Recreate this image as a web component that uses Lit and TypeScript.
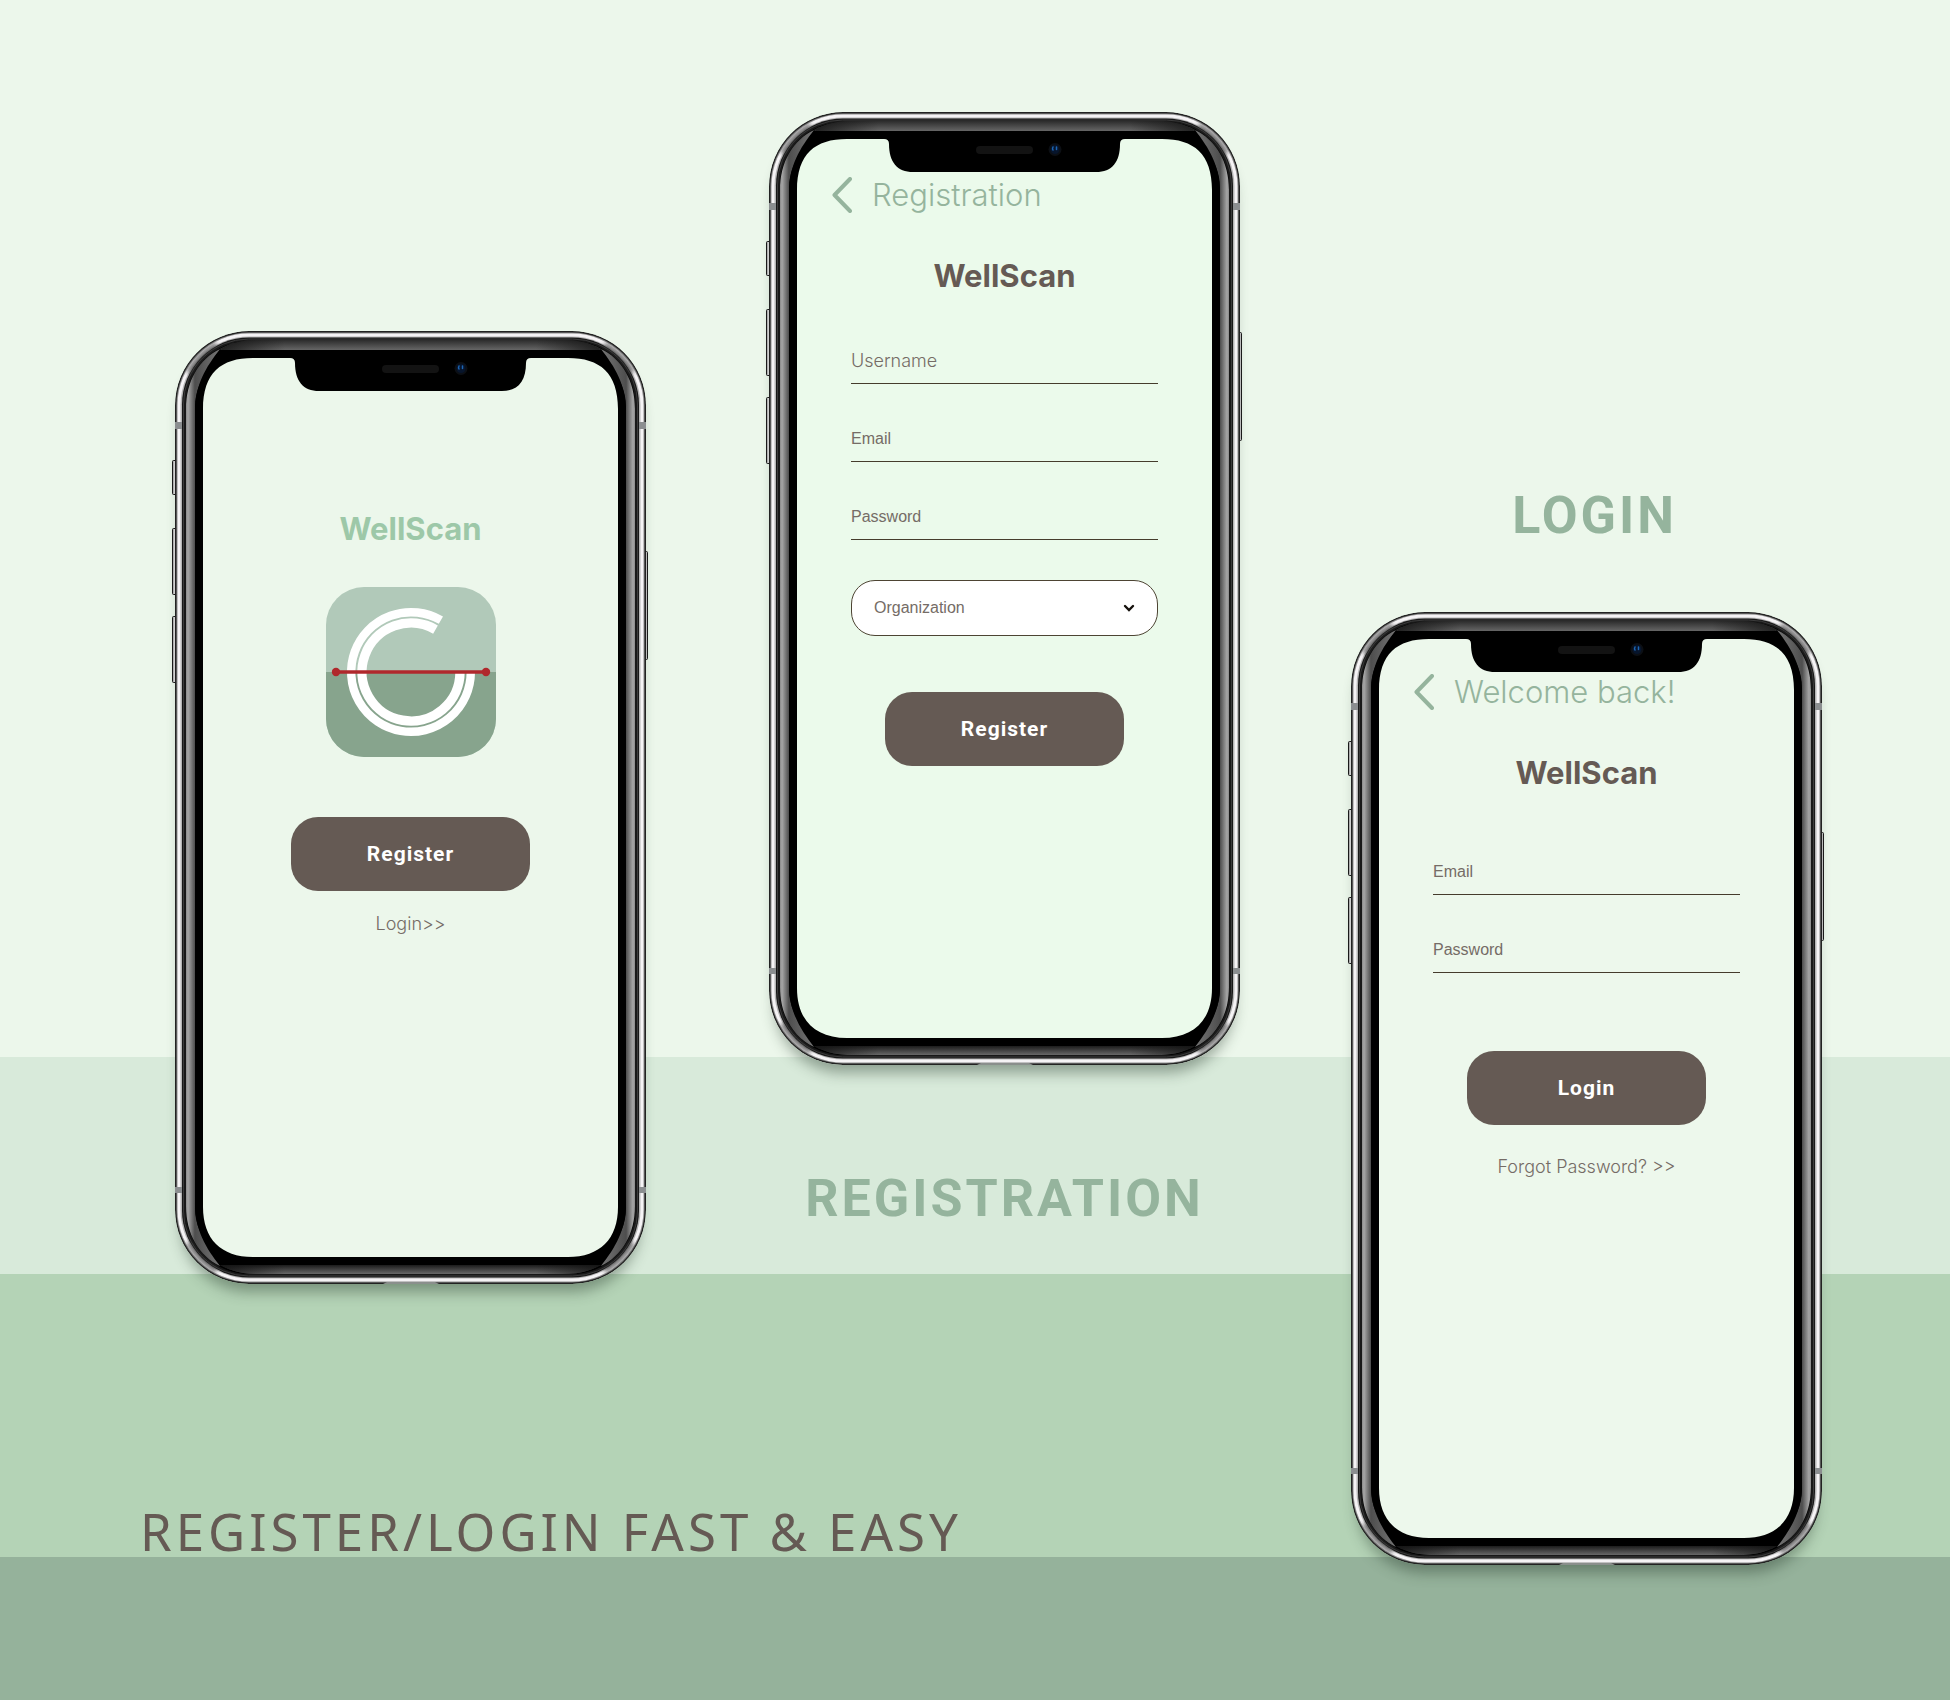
import { LitElement, html, svg, css } from "lit";
import { customElement, property } from "lit/decorators.js";

const controls = css`
  .title {
    margin: 0;
    font: 700 31px/40px Inter, "Liberation Sans", sans-serif;
    text-align: center;
    color: #655a54;
  }
  .primary {
    display: block;
    width: 239px;
    height: 74px;
    margin: 0 auto;
    padding: 0;
    border: 0;
    border-radius: 27px;
    background: #655a54;
    color: #ffffff;
    font: 700 21px/24px Roboto, "Liberation Sans", sans-serif;
    letter-spacing: 1px;
    cursor: pointer;
  }
  .link {
    display: block;
    font: 300 18px/24px Inter, "Liberation Sans", sans-serif;
    text-align: center;
    color: #756c66;
    text-decoration: none;
  }
  .bar {
    display: flex;
    align-items: center;
    gap: 20px;
    height: 36px;
    padding-left: 35px;
    color: #95b49d;
  }
  .back {
    display: block;
    width: 20px;
    height: 36px;
    padding: 0;
    border: 0;
    background: none;
    color: inherit;
    cursor: pointer;
  }
  .back svg {
    display: block;
  }
  .heading {
    margin: 0;
    font: 300 31px/36px Inter, "Liberation Sans", sans-serif;
    white-space: nowrap;
  }
  .fields {
    display: flex;
    flex-direction: column;
    gap: 34px;
    padding: 0 54px;
  }
  .field {
    display: grid;
    align-items: center;
    height: 44px;
    box-sizing: border-box;
    padding-bottom: 2px;
    border-bottom: 1px solid #453c2c;
    font: 400 16px/20px "Liberation Sans", Arial, sans-serif;
    color: #756c66;
  }
  .field.light {
    font: 300 18px/20px Inter, "Liberation Sans", sans-serif;
  }
  .field span,
  .field input {
    grid-area: 1 / 1;
  }
  .field input {
    width: 100%;
    height: 100%;
    box-sizing: border-box;
    padding: 0;
    border: 0;
    background: none;
    font: inherit;
    color: inherit;
  }
`;

const backIcon = html`<svg width="20" height="36" viewBox="0 0 20 36" aria-hidden="true">
  <path d="M18 2 L2.500 18 L18 34" fill="none" stroke="currentColor" stroke-width="4" stroke-linecap="round" stroke-linejoin="round" />
</svg>`;

@customElement("phone-frame")
export class PhoneFrame extends LitElement {
  static styles = css`
    :host {
      display: block;
      position: relative;
      width: 471px;
      min-height: 953px;
      box-sizing: border-box;
      padding: 27px 28px 28px;
      border-radius: 74px;
      box-shadow: 0 14px 14px -6px rgba(40, 60, 45, 0.42);
    }
    .body {
      position: absolute;
      inset: 0;
      width: 100%;
      height: 100%;
      overflow: visible;
    }
    .screen {
      position: relative;
      min-height: 898px;
    }
  `;

  private side() {
    return svg`
      <path fill="url(#side)" d="M11 100 V78 C11 50 24 28 45 18 C31 36 20 54 20 80 V873 C20 899 31 917 45 935 C24 925 11 903 11 875 Z" />
      <path fill="url(#fade)" d="M45 18 C58 11 70 9 84 9 H110 V19 H47 Z M45 934 C58 941 70 943 84 943 H110 V934 Z" />
      <path fill="none" stroke="#3a3a3a" stroke-width="4" stroke-linecap="round" filter="url(#soft)" opacity=".85" d="M14 40 A69.500 69.500 0 0 1 40 14" />
      <path fill="none" stroke="#3a3a3a" stroke-width="4" stroke-linecap="round" filter="url(#soft)" opacity=".85" d="M14 913 A69.500 69.500 0 0 0 40 939" />
      <path fill="#8b8e90" d="M0 91 h7 v7 h-7 z M0 856 h7 v6 h-7 z" />
    `;
  }

  render() {
    return html`
      <svg class="body" viewBox="0 0 471 953" preserveAspectRatio="none" aria-hidden="true">
        <defs>
          <linearGradient id="side" gradientUnits="userSpaceOnUse" x1="11" x2="45" y1="0" y2="0">
            <stop offset="0" stop-color="#8a8a8a" />
            <stop offset=".06" stop-color="#a6a6a6" />
            <stop offset=".26" stop-color="#4e4e4e" />
            <stop offset="1" stop-color="#757575" />
          </linearGradient>
          <linearGradient id="fade" gradientUnits="userSpaceOnUse" x1="45" x2="110" y1="0" y2="0">
            <stop offset="0" stop-color="#141414" stop-opacity=".85" />
            <stop offset="1" stop-color="#141414" stop-opacity="0" />
          </linearGradient>
          <linearGradient id="top" gradientUnits="userSpaceOnUse" x1="0" x2="0" y1="9" y2="19">
            <stop offset="0" stop-color="#2c2c2c" />
            <stop offset="1" stop-color="#666666" />
          </linearGradient>
          <linearGradient id="bottom" gradientUnits="userSpaceOnUse" x1="0" x2="0" y1="934" y2="943">
            <stop offset="0" stop-color="#1c1c1c" />
            <stop offset="1" stop-color="#686868" />
          </linearGradient>
          <linearGradient id="key" x1="0" x2="1" y1="0" y2="0">
            <stop offset="0" stop-color="#8d8d8d" />
            <stop offset=".5" stop-color="#e2e2e2" />
            <stop offset="1" stop-color="#a2a2a2" />
          </linearGradient>
          <filter id="soft" x="-50%" y="-50%" width="200%" height="200%"><feGaussianBlur stdDeviation="2" /></filter>
          <clipPath id="shell"><rect width="471" height="953" rx="74" /></clipPath>
        </defs>
        <g fill="url(#key)" stroke="#1a1a1a">
          <rect x="-2.500" y="129.500" width="5" height="34" rx="1" />
          <rect x="-2.500" y="197.500" width="5" height="66" rx="1" />
          <rect x="-2.500" y="285.500" width="5" height="66" rx="1" />
          <rect x="467.500" y="220.500" width="5" height="108" rx="1" />
        </g>
        <g clip-path="url(#shell)">
          <rect width="471" height="953" rx="74" fill="#222222" />
          <rect x="1.500" y="1.500" width="468" height="950" rx="72.500" fill="#8c8c8c" />
          <rect x="2.500" y="2.500" width="466" height="948" rx="71.500" fill="#f5f3f5" />
          <rect x="5.500" y="5.500" width="460" height="942" rx="68.500" fill="#b5b5b5" />
          <rect x="7" y="6.500" width="457" height="940" rx="67" fill="#181818" />
          <rect x="11" y="10" width="449" height="933" rx="63" fill="#000000" />
          <rect x="8.500" y="8" width="454" height="937" rx="65" fill="none" stroke="#3c3c3c" />
          <path fill="url(#top)" d="M45 18 C58 11 70 9 84 9 H387 C401 9 413 11 426 18 L424 19 H47 Z" />
          <path fill="url(#bottom)" d="M45 934 C58 941 70 943 84 943 H387 C401 943 413 941 426 934 Z" />
          ${this.side()}
          <g transform="translate(471 0) scale(-1 1)">${this.side()}</g>
          <rect x="20" y="19" width="431" height="915" rx="57" fill="#000000" />
          <path fill="#8a8f8c" d="M208 953 L212 951 H260 L264 953 Z" />
        </g>
        <path
          fill="var(--screen, #ecf7eb)"
          d="M28 78 C28 42 46 27 78 27 H115 Q120 27 120 32 C120 50 128 60 144 60 H327 C343 60 351 50 351 32 Q351 27 356 27 H393 C425 27 443 42 443 78 V876 C443 908 425 926 393 926 H78 C46 926 28 908 28 876 Z"
        />
        <rect x="207" y="34" width="57" height="8" rx="4" fill="#131313" />
        <circle cx="286" cy="37.500" r="6.500" fill="#0c0f14" />
        <circle cx="286" cy="37.500" r="4.500" fill="#07152c" />
        <path d="M284 35 q-1 2 0 3 M287.500 35 v2.500" fill="none" stroke="#1d66b4" stroke-width="1.500" stroke-linecap="round" />
      </svg>
      <div class="screen"><slot></slot></div>
    `;
  }
}

@customElement("line-field")
export class LineField extends LitElement {
  @property() label = "";
  @property() type = "text";
  @property({ type: Boolean }) light = false;

  static styles = [
    controls,
    css`
      :host {
        display: block;
      }
    `,
  ];

  render() {
    return html`<label class="field ${this.light ? "light" : ""}">
      <span>${this.label}</span>
      <input type=${this.type} />
    </label>`;
  }
}

@customElement("start-screen")
export class StartScreen extends LitElement {
  static styles = [
    controls,
    css`
      :host {
        display: block;
        padding-top: 151px;
      }
      .title {
        color: #9dc8a8;
      }
      .logo {
        display: block;
        width: 170px;
        height: 170px;
        margin: 38px auto 60px;
      }
      .link {
        margin-top: 21px;
      }
    `,
  ];

  render() {
    return html`
      <h1 class="title">WellScan</h1>
      <svg class="logo" viewBox="0 0 170 170" role="img" aria-label="WellScan">
        <defs><clipPath id="tile"><rect width="170" height="170" rx="38" /></clipPath></defs>
        <g clip-path="url(#tile)">
          <rect width="170" height="170" fill="#b1c9b9" />
          <rect y="85" width="170" height="85" fill="#87a48d" />
        </g>
        <g fill="none" stroke="#ffffff">
          <path stroke-width="8.400" d="M144.800 85 A59.800 59.800 0 1 1 114.900 33.200" />
          <path stroke-width="9.400" d="M134 85 A49 49 0 1 1 109.500 42.560" />
        </g>
        <path d="M10 85 H160" stroke="#b0282c" stroke-width="3.600" />
        <circle cx="10" cy="85" r="4.200" fill="#b0282c" />
        <circle cx="160" cy="85" r="4.200" fill="#b0282c" />
      </svg>
      <button class="primary" type="button">Register</button>
      <a class="link" href="#login">Login&gt;&gt;</a>
    `;
  }
}

@customElement("registration-screen")
export class RegistrationScreen extends LitElement {
  static styles = [
    controls,
    css`
      :host {
        display: block;
        padding-top: 38px;
      }
      .title {
        margin: 43px 0 44px;
      }
      .choice {
        position: relative;
        margin: 40px 54px 56px;
        color: #15110c;
      }
      .choice select {
        display: block;
        width: 100%;
        height: 56px;
        padding: 0 22px;
        border: 1px solid #4d4433;
        border-radius: 24px;
        background: #ffffff;
        appearance: none;
        font: 400 16px/20px "Liberation Sans", Arial, sans-serif;
        color: #756c66;
      }
      .choice svg {
        position: absolute;
        right: 23px;
        top: 24px;
        pointer-events: none;
      }
    `,
  ];

  render() {
    return html`
      <header class="bar">
        <button class="back" type="button" aria-label="Back">${backIcon}</button>
        <h2 class="heading">Registration</h2>
      </header>
      <h1 class="title">WellScan</h1>
      <div class="fields">
        <line-field label="Username" light></line-field>
        <line-field label="Email" type="email"></line-field>
        <line-field label="Password" type="password"></line-field>
      </div>
      <div class="choice">
        <select aria-label="Organization">
          <option>Organization</option>
        </select>
        <svg width="12" height="8" viewBox="0 0 12 8" aria-hidden="true">
          <path d="M2 2 L6 6 L10 2" fill="none" stroke="currentColor" stroke-width="2.400" stroke-linecap="round" />
        </svg>
      </div>
      <button class="primary" type="button">Register</button>
    `;
  }
}

@customElement("login-screen")
export class LoginScreen extends LitElement {
  static styles = [
    controls,
    css`
      :host {
        display: block;
        padding-top: 35px;
      }
      .title {
        margin: 43px 0 58px;
      }
      .fields {
        margin-bottom: 78px;
      }
      .link {
        margin-top: 30px;
      }
    `,
  ];

  render() {
    return html`
      <header class="bar">
        <button class="back" type="button" aria-label="Back">${backIcon}</button>
        <h2 class="heading">Welcome back!</h2>
      </header>
      <h1 class="title">WellScan</h1>
      <div class="fields">
        <line-field label="Email" type="email"></line-field>
        <line-field label="Password" type="password"></line-field>
      </div>
      <button class="primary" type="button">Login</button>
      <a class="link" href="#forgot">Forgot Password? &gt;&gt;</a>
    `;
  }
}

@customElement("app-root")
export class AppRoot extends LitElement {
  static styles = css`
    :host {
      display: block;
    }
    .page {
      display: grid;
      grid-template-columns: 629fr 582fr 471fr;
      grid-template-rows: auto 1fr;
      min-height: 100vh;
      box-sizing: border-box;
      padding: 112px 128px 135px 140px;
      background: linear-gradient(
        #ecf7eb 1057px,
        #d8eada 1057px 1274px,
        #b4d3b6 1274px 1557px,
        #95b29b 1557px
      );
    }
    .start {
      padding: 219px 0 0 35px;
    }
    .registration {
      --screen: #ebfaeb;
    }
    .login {
      --screen: #edf8ec;
      grid-area: 1 / 3 / 3 / 4;
      padding-top: 374px;
    }
    .caption {
      width: 471px;
      margin: 0;
      box-sizing: border-box;
      font: 700 52px/60px Roboto, "Liberation Sans", sans-serif;
      letter-spacing: 3px;
      text-align: center;
      color: #95b49d;
    }
    .registration .caption {
      margin-top: 104px;
    }
    .login .caption {
      margin-bottom: 66px;
      padding-left: 16px;
    }
    .tagline {
      grid-area: 2 / 1 / 3 / 3;
      align-self: end;
      margin: 0 0 4px;
      font: 400 51px/60px "Noto Sans", "Open Sans", sans-serif;
      letter-spacing: 4px;
      color: #655a54;
    }
    @media (max-width: 1600px) {
      .page {
        grid-template-columns: 1fr;
        grid-template-rows: none;
        justify-items: center;
        gap: 64px;
      }
      .start,
      .login {
        padding: 0;
      }
      .login,
      .tagline {
        grid-area: auto;
      }
    }
  `;

  render() {
    return html`
      <main class="page">
        <section class="start">
          <phone-frame><start-screen></start-screen></phone-frame>
        </section>
        <section class="registration">
          <phone-frame><registration-screen></registration-screen></phone-frame>
          <h2 class="caption">REGISTRATION</h2>
        </section>
        <section class="login">
          <h2 class="caption">LOGIN</h2>
          <phone-frame><login-screen></login-screen></phone-frame>
        </section>
        <p class="tagline">REGISTER/LOGIN FAST &amp; EASY</p>
      </main>
    `;
  }
}
